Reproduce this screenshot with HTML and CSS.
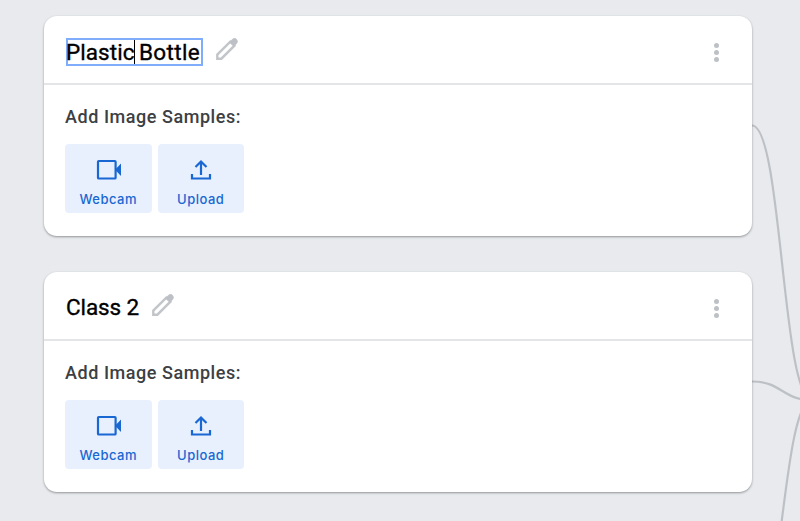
FILE: index.html
```html
<!DOCTYPE html>
<html lang="en">
<head>
<meta charset="utf-8">
<title>Image classes</title>
<link rel="stylesheet" href="styles.css">
</head>
<body>
<svg class="wires" width="800" height="521" viewBox="0 0 800 521">
  <path d="M750 125.500H752C782 125.500 782 400 812 400"/>
  <path d="M750 381.500H752C782 381.500 782 400 812 400"/>
  <path d="M752 637.500C782 637.500 782 400 812 400"/>
</svg>
<svg class="defs" width="0" height="0">
  <symbol id="pencil" viewBox="0 0 24 24">
    <path class="outline" d="M2.300 21.700V17.600L15.300 4.600L19.400 8.700L6.400 21.700Z"/>
    <path class="solid" d="M14.300 4.900L18 1.500Q19.800 .2 21.800 2.200Q23.800 4.200 22.300 6L19 9.700Z"/>
  </symbol>
  <symbol id="camera" viewBox="0 0 26 22">
    <rect class="line" x="2" y="2" width="17.600" height="17.500" rx=".8"/>
    <path class="fill" d="M19 10.800L25 4.600V17Z"/>
  </symbol>
  <symbol id="upload" viewBox="0 0 22 22">
    <path class="line" d="M11 16V3M5.500 8L11 2.500L16.500 8M2 15V19.500H20V15"/>
  </symbol>
</svg>
<main class="classes">
  <section class="card">
    <header class="head">
      <h2 class="name editing"><span class="first">Plastic</span><i class="caret"></i><span class="second">Bottle</span></h2>
      <svg class="pencil"><use href="#pencil"/></svg>
      <span class="more"><i></i><i></i><i></i></span>
    </header>
    <div class="body">
      <p class="label">Add Image Samples:</p>
      <div class="actions">
        <button class="action"><svg class="camera"><use href="#camera"/></svg><span class="webcam">Webcam</span></button>
        <button class="action"><svg class="upload"><use href="#upload"/></svg><span>Upload</span></button>
      </div>
    </div>
  </section>
  <section class="card">
    <header class="head">
      <h2 class="name">Class 2</h2>
      <svg class="pencil"><use href="#pencil"/></svg>
      <span class="more"><i></i><i></i><i></i></span>
    </header>
    <div class="body">
      <p class="label">Add Image Samples:</p>
      <div class="actions">
        <button class="action"><svg class="camera"><use href="#camera"/></svg><span class="webcam">Webcam</span></button>
        <button class="action"><svg class="upload"><use href="#upload"/></svg><span>Upload</span></button>
      </div>
    </div>
  </section>
</main>
</body>
</html>
```
FILE: styles.css
```css
* { box-sizing: border-box; }
body { margin: 0; height: 521px; overflow: hidden; background: #e8eaed; font-family: Roboto, "Liberation Sans", sans-serif; }
.wires { position: absolute; left: 0; top: 0; fill: none; stroke: #bdc1c6; stroke-width: 2.2; }
.defs { position: absolute; }
.classes { position: relative; display: flex; flex-direction: column; gap: 36px; width: 708px; margin: 16px 0 0 44px; }
.card { height: 220px; background: #fff; border-radius: 13px; box-shadow: 0 1px 2px rgba(60,64,67,.4), 0 1px 3px rgba(60,64,67,.12); }
.head { display: flex; align-items: center; height: 69px; padding: 3px 33px 0 22px; border-bottom: 2px solid #e4e5e6; }
.name { margin: 0; font-size: 22.5px; line-height: 24px; font-weight: 400; -webkit-text-stroke: .35px #000; color: #000; padding: 2px 0; letter-spacing: -.1px; white-space: nowrap; }
.editing { display: flex; width: 137px; height: 28px; margin-top: 2px; border: 2px solid #80adfb; padding: 0; letter-spacing: .05px; }
.first { margin-left: -2px; line-height: 24px; }
.second { line-height: 24px; letter-spacing: .35px; }
.caret { flex: none; width: 1px; height: 24px; background: #000; margin: 0 3.500px 0 0; }
.pencil { width: 24px; height: 24px; margin: -5px 0 0 12px; }
.outline { fill: none; stroke: #c2c5c9; stroke-width: 2.4; }
.solid { fill: #bdc1c6; }
.more { margin-left: auto; display: flex; flex-direction: column; gap: 2px; margin-top: 2px; }
.more i { width: 5px; height: 5px; border-radius: 50%; background: #bdc1c6; }
.body { padding: 20px 21px 0; }
.label { margin: 0; height: 39px; font-size: 18px; line-height: 24px; font-weight: 500; color: #3c4043; letter-spacing: .55px; white-space: nowrap; }
.actions { display: flex; gap: 6px; }
.action { display: flex; flex-direction: column; align-items: center; width: 86.500px; height: 69px; padding: 15px 0 0; border: 0; border-radius: 4px; background: #e8f0fe; color: #1967d2; font: 500 13px/16px Inter, "Liberation Sans", sans-serif; letter-spacing: .5px; }
.action svg { height: 22px; margin-bottom: 10px; }
.camera { width: 26px; margin-left: 1px; }
.upload { width: 22px; }
.line { fill: none; stroke: #1967d2; stroke-width: 2.2; }
.fill { fill: #1967d2; }
```
